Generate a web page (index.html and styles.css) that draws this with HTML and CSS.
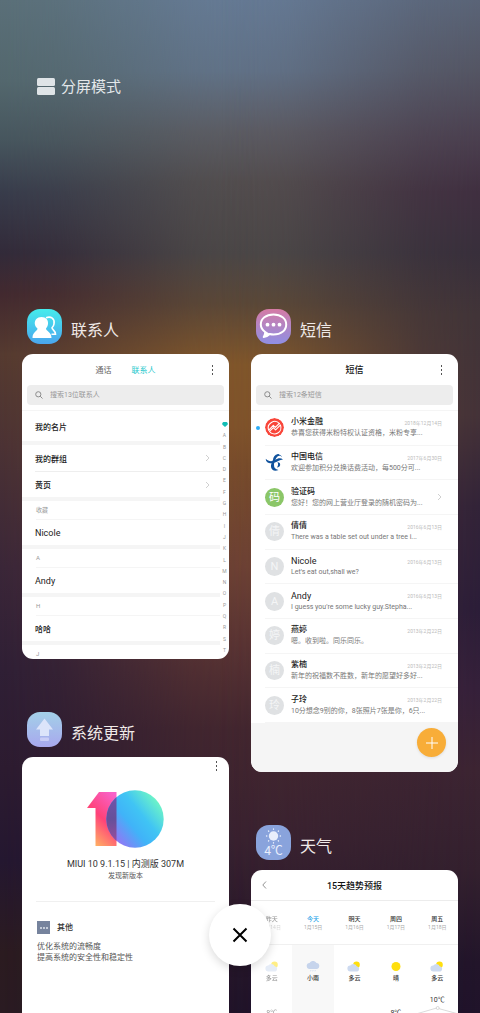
FILE: index.html
```html
<!DOCTYPE html>
<html lang="zh-CN">
  <head>
    <meta charset="UTF-8" />
    <meta name="viewport" content="width=device-width, initial-scale=1.0" />
    <title>最近任务</title>
    <link rel="stylesheet" href="styles.css">
  </head>
  <body>
    <main class="recents">
      <button class="split-mode" type="button">
        <svg class="split-icon" viewBox="0 0 18 18">
          <rect width="18" height="8" rx="1.5" />
          <rect y="9" width="18" height="8" rx="1.5" />
        </svg>
        分屏模式
      </button>

      <div class="tasks">
        <div class="column">
          <!-- Contacts -->
          <section class="task">
            <header class="task-head">
              <svg class="app-icon" viewBox="0 0 35 35">
                <defs>
                  <linearGradient id="contactsBg" x1="0" y1="0" x2="0" y2="1">
                    <stop offset="0" stop-color="#45ecec" />
                    <stop offset="1" stop-color="#4aa5ee" />
                  </linearGradient>
                </defs>
                <rect width="35" height="35" rx="13" fill="url(#contactsBg)" />
                <path d="M19 8.800c5-2 9 1 8 6-.3 2-1 3-2 4 0 2 3.500 2.500 3.500 6.500h-4" fill="none" stroke="#fff" stroke-width="1.600" />
                <path d="M14.500 8c4.500 0 7 3 6.500 7-.2 2-1 3-2 4.500 0 3 5.500 3 5.500 9.500H5.500c0-6.500 5-6.500 5-9.500C9 18 8 17 7.800 15 7.500 11 10 8 14.500 8z" fill="#fff" />
              </svg>
              <h2>联系人</h2>
            </header>
            <div class="card contacts">
              <div class="bar">
                <div class="tabs">
                  <button type="button">通话</button>
                  <button type="button" class="active">联系人</button>
                </div>
                <button class="more" type="button" aria-label="更多"><i></i><i></i><i></i></button>
              </div>
              <label class="search">
                <svg viewBox="0 0 8 8"><circle cx="3.300" cy="3.300" r="2.600" /><path d="M5.200 5.200L7.500 7.500" /></svg>
                <input type="search" placeholder="搜索13位联系人" aria-label="搜索联系人" />
              </label>
              <div class="contacts-body">
                <div class="contact-list">
                  <div class="row tall">我的名片</div>
                  <div class="group">
                    <a class="row entry" href="#">我的群组 <svg class="chevron" viewBox="0 0 5 8"><path d="M1 1l3 3-3 3" /></svg></a>
                    <a class="row entry" href="#">黄页 <svg class="chevron" viewBox="0 0 5 8"><path d="M1 1l3 3-3 3" /></svg></a>
                  </div>
                  <div class="group"><h3>收藏</h3><div class="row latin">Nicole</div></div>
                  <div class="group"><h3>A</h3><div class="row latin">Andy</div></div>
                  <div class="group"><h3>H</h3><div class="row">哈哈</div></div>
                  <div class="group"><h3>J</h3></div>
                </div>
                <nav class="letters">
                  <a href="#" aria-label="收藏"><svg viewBox="0 0 6 5"><path d="M3 5L.5 2.700C-.5 1 1 0 2 0h2c1 0 2.500 1 1.500 2.700z" /></svg></a>
                  <a href="#">A</a><a href="#">B</a><a href="#">C</a><a href="#">D</a><a href="#">E</a>
                  <a href="#">F</a><a href="#">G</a><a href="#">H</a><a href="#">I</a><a href="#">J</a>
                  <a href="#">K</a><a href="#">L</a><a href="#">M</a><a href="#">N</a><a href="#">O</a>
                  <a href="#">P</a><a href="#">Q</a><a href="#">R</a><a href="#">S</a><a href="#">T</a>
                </nav>
              </div>
            </div>
          </section>

          <!-- System update -->
          <section class="task">
            <header class="task-head">
              <svg class="app-icon" viewBox="0 0 35 35">
                <defs>
                  <linearGradient id="updateBg" x1="0" y1="0" x2="0" y2="1">
                    <stop offset="0" stop-color="#a3d0e8" />
                    <stop offset="1" stop-color="#a8a8ee" />
                  </linearGradient>
                </defs>
                <rect width="35" height="35" rx="13" fill="url(#updateBg)" />
                <path d="M17.500 6.500L26 17.500h-4V24h-9v-6.500H9z" fill="#dce4fa" />
                <rect x="13" y="25.500" width="9" height="3.500" rx="1" fill="#c9cdf6" />
              </svg>
              <h2>系统更新</h2>
            </header>
            <div class="card update">
              <button class="more" type="button" aria-label="更多"><i></i><i></i><i></i></button>
              <svg class="logo" viewBox="0 0 77 58">
                <defs>
                  <linearGradient id="one" x1="0.800" y1="0" x2="0.300" y2="1">
                    <stop offset="0" stop-color="#f862c8" />
                    <stop offset="0.500" stop-color="#ff4279" />
                    <stop offset="1" stop-color="#ffb063" />
                  </linearGradient>
                  <linearGradient id="zero" x1="0.100" y1="0.850" x2="0.900" y2="0.200">
                    <stop offset="0" stop-color="#9a70f5" />
                    <stop offset="0.400" stop-color="#40b3f8" />
                    <stop offset="0.650" stop-color="#40c4f4" />
                    <stop offset="1" stop-color="#6cf3c8" />
                  </linearGradient>
                  <linearGradient id="both" x1="0" y1="0" x2="0" y2="1">
                    <stop offset="0" stop-color="#7156b0" />
                    <stop offset="0.500" stop-color="#66509a" />
                    <stop offset="1" stop-color="#a74c9b" />
                  </linearGradient>
                  <clipPath id="stem"><rect x="8" y="2" width="21.500" height="54" /></clipPath>
                </defs>
                <path d="M0 18L12 2h17.500v54H8.500V18z" fill="url(#one)" />
                <circle cx="48" cy="29" r="28.700" fill="url(#zero)" />
                <circle cx="48" cy="29" r="28.700" fill="url(#both)" clip-path="url(#stem)" />
              </svg>
              <p class="version">MIUI 10 9.1.15 | 内测版 307M</p>
              <p class="found">发现新版本</p>
              <div class="notes">
                <h3><span class="note-icon"><i></i><i></i><i></i></span>其他</h3>
                <p>优化系统的流畅度</p>
                <p>提高系统的安全性和稳定性</p>
              </div>
            </div>
          </section>
        </div>

        <div class="column">
          <!-- Messages -->
          <section class="task">
            <header class="task-head">
              <svg class="app-icon" viewBox="0 0 35 35">
                <defs>
                  <linearGradient id="smsBg" x1="0" y1="0" x2="0" y2="1">
                    <stop offset="0" stop-color="#d57ba5" />
                    <stop offset="1" stop-color="#8f8fe4" />
                  </linearGradient>
                </defs>
                <rect width="35" height="35" rx="13" fill="url(#smsBg)" />
                <path d="M17.500 5.500c7.500 0 12.700 4 12.700 10s-5.200 10-12.700 10c-1.500 0-2.700-.2-3.800-.5-1.500 1.500-3.500 2.700-6 3 1-1.300 1.600-3 1.500-5-2.800-2-4.400-4.600-4.400-7.500 0-6 5.200-10 12.700-10z" fill="none" stroke="#fff" stroke-width="2" stroke-linejoin="round" />
                <path d="M10 22.500l4 2.500-6.500 3z" fill="#fff" />
                <g fill="#fff"><circle cx="11.500" cy="15.700" r="1.900" /><circle cx="17.500" cy="15.700" r="1.900" /><circle cx="23.500" cy="15.700" r="1.900" /></g>
              </svg>
              <h2>短信</h2>
            </header>
            <div class="card messages">
              <div class="bar">
                <h3>短信</h3>
                <button class="more" type="button" aria-label="更多"><i></i><i></i><i></i></button>
              </div>
              <label class="search">
                <svg viewBox="0 0 8 8"><circle cx="3.300" cy="3.300" r="2.600" /><path d="M5.200 5.200L7.500 7.500" /></svg>
                <input type="search" placeholder="搜索12条短信" aria-label="搜索短信" />
              </label>
              <ul class="threads">
                <li class="unread">
                  <svg class="avatar" viewBox="0 0 19 19">
                    <circle cx="9.500" cy="9.500" r="9.500" fill="#f9463a" />
                    <g fill="none" stroke="#fff" stroke-width="1.100" stroke-linejoin="round" stroke-linecap="round">
                      <path d="M3.700 12.200a6.400 6.400 0 0 1 10.800-6.500M15.400 7a6.400 6.400 0 0 1-10.900 6.500" />
                      <path d="M4 11.800l4.300-4.500 2 2 4-3.800M4.700 13.200l3.700-3.600 2.200 2.200 4.500-4.500" />
                    </g>
                  </svg>
                  <div class="text"><h4>小米金融</h4><p>恭喜您获得米粉特权认证资格，米粉专享...</p></div>
                  <time>2018年12月14日</time>
                </li>
                <li>
                  <svg class="avatar" viewBox="0 0 19 19">
                    <g fill="#11539d">
                      <path d="M.5 5.500C1 10.500 6 11 10 9.500c2.700-1 4.500-2.600 8-3-1.500-1.300-3.600-1.500-5.500-.8C9.500 7 7 8.700 4.500 8 2.700 7.500 1.500 6.700.5 5.500z" />
                      <path d="M8 7C8.500 2.500 12 .5 14.800 1.200c1.600.4 2.300 1.600 2 3-1-1.700-3-1.900-4.300-.7C10.800 5 9 9.500 9 12c0 3 1.300 4 4.500 5-3.500 1.700-7 .4-7.500-3-.3-2.300.8-5 2-7z" />
                      <path d="M12.500 9c2 .3 3 1.600 2.600 3.200-.3 1.300-1.500 2.100-3.100 2.300 1-1.500 1.500-3.500.5-5.500z" />
                    </g>
                  </svg>
                  <div class="text"><h4>中国电信</h4><p>欢迎参加积分兑换话费活动，每500分可...</p></div>
                  <time>2017年6月30日</time>
                </li>
                <li>
                  <span class="avatar green">码</span>
                  <div class="text"><h4>验证码</h4><p>您好！您的网上营业厅登录的随机密码为...</p></div>
                  <svg class="chevron" viewBox="0 0 5 8"><path d="M1 1l3 3-3 3" /></svg>
                </li>
                <li>
                  <span class="avatar">倩</span>
                  <div class="text"><h4>倩倩</h4><p class="latin">There was a table set out under a tree i...</p></div>
                  <time>2016年6月13日</time>
                </li>
                <li>
                  <span class="avatar">N</span>
                  <div class="text"><h4 class="latin">Nicole</h4><p class="latin">Let's eat out,shall we?</p></div>
                  <time>2016年6月13日</time>
                </li>
                <li>
                  <span class="avatar">A</span>
                  <div class="text"><h4 class="latin">Andy</h4><p class="latin">I guess you're some lucky guy.Stepha...</p></div>
                  <time>2016年6月13日</time>
                </li>
                <li>
                  <span class="avatar">婷</span>
                  <div class="text"><h4>燕婷</h4><p>嗯。收到啦。同乐同乐。</p></div>
                  <time>2013年2月22日</time>
                </li>
                <li>
                  <span class="avatar">楠</span>
                  <div class="text"><h4>紫楠</h4><p>新年的祝福数不胜数，新年的愿望好多好...</p></div>
                  <time>2013年2月22日</time>
                </li>
                <li>
                  <span class="avatar">玲</span>
                  <div class="text"><h4>子玲</h4><p>10分想念9别的你，8张照片7张是你，6只...</p></div>
                  <time>2013年2月22日</time>
                </li>
              </ul>
              <div class="compose">
                <button type="button" aria-label="新建短信">
                  <svg viewBox="0 0 12 12"><path d="M6 0v12M0 6h12" /></svg>
                </button>
              </div>
            </div>
          </section>

          <!-- Weather -->
          <section class="task">
            <header class="task-head">
              <svg class="app-icon" viewBox="0 0 35 35">
                <rect width="35" height="35" rx="13" fill="#89a3dc" />
                <circle cx="17.500" cy="11" r="4.700" fill="#e9effc" />
                <g stroke="#e9effc" stroke-width="1.300" stroke-linecap="round">
                  <path d="M17.500 4v.3M17.500 17.700v.3M10.500 11h.3M24.200 11h.3M12.500 6l.2.2M22.300 15.800l.2.2M12.500 16l.2-.2M22.300 6.200l.2-.2" />
                </g>
                <text x="17.500" y="30" text-anchor="middle">4℃</text>
              </svg>
              <h2>天气</h2>
            </header>
            <div class="card weather">
              <div class="bar">
                <button class="back" type="button" aria-label="返回"><svg viewBox="0 0 5 8"><path d="M4 .5L.8 4 4 7.500" /></svg></button>
                <h3>15天趋势预报</h3>
              </div>
              <div class="days">
                <div class="day past">
                  <div class="date"><b>昨天</b><small>1月14日</small></div>
                  <div class="sky">
                    <svg viewBox="0 0 14 11"><circle cx="9.500" cy="3.800" r="3.300" fill="#ffdf0e" /><path d="M3.500 10.500a3 3 0 0 1-.2-6 3.600 3.600 0 0 1 6.400.8 2.700 2.700 0 0 1 .8 5.200z" fill="#cddaf0" /></svg>
                    <span>多云</span>
                    <em class="low">8℃</em>
                  </div>
                </div>
                <div class="day today">
                  <div class="date"><b>今天</b><small>1月15日</small></div>
                  <div class="sky">
                    <svg viewBox="0 0 14 11"><path d="M4 8a3 3 0 0 1-.5-6 4 4 0 0 1 7 0 3 3 0 0 1-.5 6z" fill="#c6d4ec" /><path d="M5 9l-.5 1.300M7.200 9l-.5 1.300M9.400 9l-.5 1.300" stroke="#c6d4ec" stroke-width="0.700" /></svg>
                    <span>小雨</span>
                  </div>
                </div>
                <div class="day">
                  <div class="date"><b>明天</b><small>1月16日</small></div>
                  <div class="sky">
                    <svg viewBox="0 0 14 11"><circle cx="9.500" cy="3.800" r="3.300" fill="#ffdf0e" /><path d="M3.500 10.500a3 3 0 0 1-.2-6 3.600 3.600 0 0 1 6.400.8 2.700 2.700 0 0 1 .8 5.200z" fill="#cddaf0" /></svg>
                    <span>多云</span>
                  </div>
                </div>
                <div class="day">
                  <div class="date"><b>周四</b><small>1月17日</small></div>
                  <div class="sky">
                    <svg viewBox="0 0 14 11"><circle cx="7" cy="5.500" r="4.500" fill="#ffdf0e" /></svg>
                    <span>晴</span>
                    <em class="low">8℃</em>
                  </div>
                </div>
                <div class="day">
                  <div class="date"><b>周五</b><small>1月18日</small></div>
                  <div class="sky">
                    <svg viewBox="0 0 14 11"><circle cx="9.500" cy="3.800" r="3.300" fill="#ffdf0e" /><path d="M3.500 10.500a3 3 0 0 1-.2-6 3.600 3.600 0 0 1 6.400.8 2.700 2.700 0 0 1 .8 5.200z" fill="#cddaf0" /></svg>
                    <span>多云</span>
                    <em>10℃</em>
                    <svg class="trend" viewBox="0 0 40 12"><path d="M0 7.500L19 2l20 5.500" /><circle cx="20" cy="2" r="1.500" /></svg>
                  </div>
                </div>
              </div>
            </div>
          </section>
        </div>
      </div>
    </main>

    <button class="close-all" type="button" aria-label="全部关闭">
      <svg viewBox="0 0 16 16"><path d="M1.500 1.500l13 13M14.500 1.500l-13 13" /></svg>
    </button>
  </body>
</html>
```

FILE: styles.css
```css
* {
  box-sizing: border-box;
  margin: 0;
  padding: 0;
}
body {
  height: 100vh;
  overflow: hidden;
  position: relative;
  font-family: Roboto, "Noto Sans CJK SC", sans-serif;
  color: #333;
  background: linear-gradient(#667b96 0%, #627389 7%, #5d5d64 13%, #544f4f 18%, #4d4948 25%, #5d4a38 30%, #85592a 36%, #85562a 42%, #7d4f2b 46%, #724434 56%, #5c3533 64%, #44272f 72%, #3a2230 83%, #25162a 95%, #20132a 100%);
}
/* wallpaper is darker towards both sides */
body::before,
body::after {
  content: "";
  position: absolute;
  inset: 0;
  z-index: -1;
}
body::before {
  background: linear-gradient(#5a6f78 0%, #53676d 8%, #46555d 14%, #383c4b 19%, #322a39 25%, #42292f 29%, #553a30 35%, #4b3234 44%, #3a2638 56%, #2f1f35 66%, #2c1b30 76%, #241730 85%, #2b1b20 94%, #2a1b22 100%);
  -webkit-mask-image: linear-gradient(to right, #000 0%, rgba(0, 0, 0, 0.85) 12%, rgba(0, 0, 0, 0.5) 26%, rgba(0, 0, 0, 0.15) 40%, transparent 54%);
  mask-image: linear-gradient(to right, #000 0%, rgba(0, 0, 0, 0.85) 12%, rgba(0, 0, 0, 0.5) 26%, rgba(0, 0, 0, 0.15) 40%, transparent 54%);
}
body::after {
  background: linear-gradient(#5a6477 0%, #545563 7%, #4a3e4e 14%, #402f40 19%, #382f3b 25%, #413438 31%, #443238 41%, #322338 50%, #2b1d38 60%, #35203a 68%, #3c2432 76%, #33202e 86%, #22152a 95%, #20132a 100%);
  -webkit-mask-image: linear-gradient(to left, #000 0%, rgba(0, 0, 0, 0.85) 12%, rgba(0, 0, 0, 0.5) 26%, rgba(0, 0, 0, 0.15) 40%, transparent 54%);
  mask-image: linear-gradient(to left, #000 0%, rgba(0, 0, 0, 0.85) 12%, rgba(0, 0, 0, 0.5) 26%, rgba(0, 0, 0, 0.15) 40%, transparent 54%);
}
button {
  border: none;
  background: none;
  font: inherit;
  color: inherit;
}
a {
  color: inherit;
  text-decoration: none;
}
svg {
  display: block;
}
.recents {
  height: 100vh;
  padding: 76px 22px 0;
  overflow: hidden;
}
.split-mode {
  display: flex;
  align-items: center;
  gap: 6px;
  margin-left: 15px;
  font-size: 15px;
  line-height: 22px;
  color: #e3e7ea;
}
.split-icon {
  width: 18px;
  height: 18px;
  fill: #dfe4e7;
}
.tasks {
  display: grid;
  grid-template-columns: 1fr 1fr;
  gap: 22px;
  margin-top: 211px;
}
.column {
  display: flex;
  flex-direction: column;
  gap: 53px;
  min-width: 0;
}
.task-head {
  display: flex;
  align-items: center;
  gap: 9px;
  margin: 0 0 10px 5px;
  color: #f0eae8;
}
.app-icon {
  width: 35px;
  height: 35px;
}
.app-icon text {
  font-size: 12px;
  fill: #e9effc;
}
.task-head h2 {
  font-size: 16px;
  font-weight: 400;
  line-height: 24px;
  padding-top: 9px;
}
.card {
  display: flex;
  flex-direction: column;
  background: #fff;
  border-radius: 11px;
  overflow: hidden;
}

/* shared card parts */
.bar {
  display: grid;
  grid-template-columns: 32px 1fr 32px;
  align-items: center;
  height: 31px;
  flex: none;
}
.bar h3 {
  grid-column: 2;
  text-align: center;
  font-size: 9px;
  font-weight: 500;
  color: #111;
}
.tabs {
  grid-column: 2;
  display: flex;
  justify-content: center;
  gap: 20px;
  font-size: 8px;
  color: #666;
}
.tabs .active {
  color: #1cc8cc;
}
.more {
  display: flex;
  flex-direction: column;
  align-items: center;
  gap: 2px;
  width: 30px;
}
.more i {
  width: 1px;
  height: 2px;
  background: #555;
}
.search {
  display: flex;
  align-items: center;
  gap: 7px;
  flex: none;
  height: 20px;
  margin: 0 5px 5px;
  padding: 0 8px;
  border-radius: 4px;
  background: #ededed;
}
.search svg {
  width: 8px;
  height: 8px;
  fill: none;
  stroke: #8c8c8c;
}
.search input {
  flex: 1;
  min-width: 0;
  border: none;
  outline: none;
  background: none;
  font: inherit;
  font-size: 7px;
}
.search input::placeholder {
  color: #999;
}
.chevron {
  width: 5px;
  height: 8px;
  fill: none;
  stroke: #c4c4c4;
  stroke-width: 0.8;
}

/* contacts */
.contacts {
  max-height: 305px;
}
.contacts-body {
  display: flex;
  flex: 1;
  min-height: 0;
  border-top: 1px solid #f5f5f5;
}
.contact-list {
  flex: 1;
}
.row {
  display: flex;
  align-items: center;
  justify-content: space-between;
  height: 25px;
  margin-left: 13px;
  font-size: 8px;
  font-weight: 500;
  color: #222;
}
.row.latin {
  font-size: 9px;
  font-weight: 400;
}
.row.tall {
  height: 30px;
}
.entry {
  height: 26px;
  padding-right: 10px;
}
.entry + .entry {
  border-top: 1px solid #eee;
}
.group {
  border-top: 4px solid #f5f5f5;
}
.group h3 {
  height: 19px;
  margin-left: 14px;
  border-bottom: 1px solid #f5f5f5;
  font-size: 6px;
  font-weight: 400;
  line-height: 18px;
  color: #999;
}
.letters {
  display: flex;
  flex-direction: column;
  justify-content: space-between;
  align-items: center;
  width: 9px;
  padding: 9px 0 4px;
  font-size: 5px;
  line-height: 9px;
  color: #999;
}
.letters svg {
  width: 6px;
  height: 5px;
  margin: 2px 0;
  fill: #12bdb5;
}

/* messages */
.threads {
  display: grid;
  grid-auto-rows: 1fr;
  height: 313px;
  border-top: 1px solid #f5f5f5;
  list-style: none;
}
.threads li {
  display: flex;
  align-items: center;
  margin-left: 14px;
  padding-right: 16px;
  border-bottom: 1px solid #f5f5f5;
  position: relative;
}
.unread::before {
  content: "";
  position: absolute;
  left: -9px;
  width: 4px;
  height: 4px;
  border-radius: 50%;
  background: #2cacf6;
}
.avatar {
  flex: none;
  width: 19px;
  height: 19px;
  border-radius: 50%;
  background: #dfe1e3;
  color: #f4f5f6;
  font-size: 11px;
  line-height: 19px;
  text-align: center;
}
svg.avatar {
  background: none;
}
.avatar.green {
  background: #8bc668;
  color: #fff;
}
.text {
  flex: 1;
  min-width: 0;
  margin-left: 7px;
  white-space: nowrap;
}
.text h4 {
  font-size: 8px;
  font-weight: 500;
  line-height: 12px;
  color: #222;
}
.text h4.latin {
  font-size: 9px;
  font-weight: 400;
}
.text p {
  font-size: 7px;
  line-height: 11px;
  color: #777;
}
.threads time {
  align-self: flex-start;
  margin: 8px 0 0 -60px;
  font-size: 5px;
  line-height: 9px;
  color: #bbb;
}
.compose {
  display: flex;
  justify-content: flex-end;
  height: 49px;
  padding: 5px 12px;
  background: #f5f5f5;
}
.compose button {
  display: grid;
  place-items: center;
  width: 29px;
  height: 29px;
  border-radius: 50%;
  background: #f8ad38;
  box-shadow: 0 1px 3px rgba(0, 0, 0, 0.1);
}
.compose svg {
  width: 12px;
  height: 12px;
  stroke: #fff;
}

/* system update */
.update {
  height: 304px;
}
.update .more {
  align-self: flex-end;
  width: 26px;
  margin-top: 4px;
}
.logo {
  align-self: center;
  width: 77px;
  height: 58px;
  margin-top: 19px;
}
.version {
  margin-top: 9px;
  font-size: 9px;
  line-height: 14px;
  text-align: center;
}
.found {
  font-size: 7px;
  line-height: 10px;
  text-align: center;
  color: #555;
}
.notes {
  margin: 20px 14px 0;
  padding: 19px 1px 0;
  border-top: 1px solid #f0f0f0;
  font-size: 8px;
  line-height: 11px;
  color: #555;
}
.notes h3 {
  display: flex;
  align-items: center;
  gap: 7px;
  margin-bottom: 7px;
  font-size: 8px;
  font-weight: 500;
  color: #333;
}
.note-icon {
  display: flex;
  align-items: center;
  justify-content: center;
  gap: 1px;
  width: 13px;
  height: 13px;
  background: #76839d;
}
.note-icon i {
  width: 2px;
  height: 2px;
  border-radius: 50%;
  background: #dfe3ec;
}

/* weather */
.weather {
  height: 304px;
}
.weather .bar {
  border-bottom: 1px solid #ececec;
}
.back svg {
  width: 5px;
  height: 8px;
  margin-left: 11px;
  fill: none;
  stroke: #777;
  stroke-width: 0.8;
}
.days {
  display: grid;
  grid-template-columns: repeat(5, 1fr);
  flex: 1;
}
.day {
  display: flex;
  flex-direction: column;
  text-align: center;
}
.date {
  height: 44px;
  padding-top: 13px;
  border-bottom: 1px solid #f0f0f0;
}
.date b,
.date small {
  display: block;
  font-size: 6px;
  font-weight: 500;
  line-height: 9px;
}
.date small {
  font-size: 5px;
  font-weight: 400;
  color: #aaa;
}
.sky {
  display: flex;
  flex-direction: column;
  align-items: center;
  flex: 1;
  padding-top: 16px;
  font-size: 6px;
  font-weight: 500;
  line-height: 12px;
}
.sky svg {
  width: 14px;
  height: 11px;
}
.sky em {
  margin-top: 10px;
  font-size: 7px;
  font-style: normal;
  font-weight: 400;
}
.sky em.low {
  margin-top: 23px;
}
.sky .trend {
  width: 100%;
  height: 12px;
  fill: #fff;
  stroke: #ccc;
  stroke-width: 0.7;
}
.past > div > * {
  opacity: 0.5;
}
.today b {
  color: #1a9fe8;
}
.today .sky {
  background: #f8f8f8;
}

.close-all {
  position: fixed;
  left: 50%;
  bottom: 47px;
  display: grid;
  place-items: center;
  width: 62px;
  height: 62px;
  margin-left: -31px;
  border-radius: 50%;
  background: #fff;
  box-shadow: 0 3px 10px rgba(0, 0, 0, 0.15);
}
.close-all svg {
  width: 16px;
  height: 16px;
  stroke: #000;
  stroke-width: 2;
}
```
